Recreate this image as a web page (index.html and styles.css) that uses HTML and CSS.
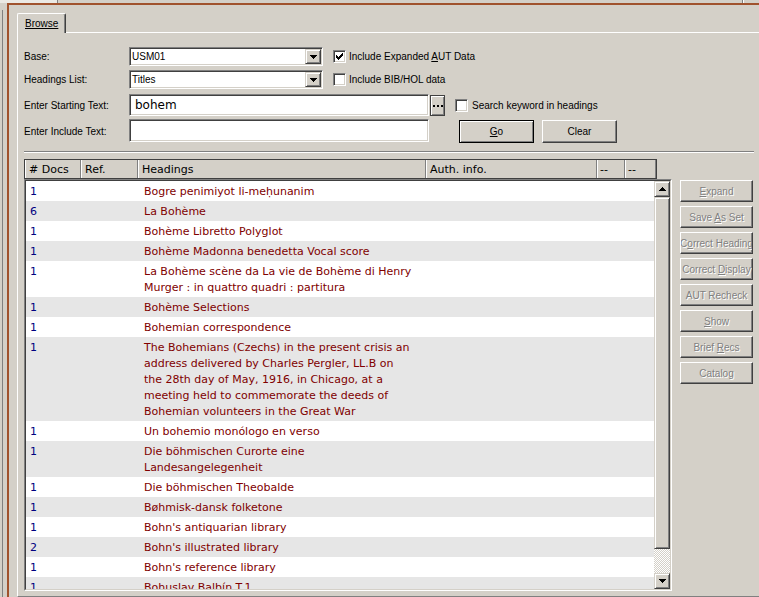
FILE: index.html
```html
<!DOCTYPE html>
<html>
<head>
<meta charset="utf-8">
<title>Browse</title>
<link rel="stylesheet" href="styles.css">
</head>
<body>
<div class="topstrip"><div class="ts-a"></div><div class="ts-b"></div></div>
<div class="shell">
  <div class="leftstrip"></div>
  <div class="window">
    <div class="tabs">
      <div class="tab"><span class="ul">Browse</span></div>
      <div class="tabfill"></div>
    </div>
    <div class="panel">
      <div class="frow r1">
        <span class="lbl">Base:</span>
        <div class="combo"><span class="cval">USM01</span><span class="dd"><svg width="7" height="4" viewBox="0 0 7 4" shape-rendering="crispEdges"><path d="M0 0H7V1H6V2H5V3H4V4H3V3H2V2H1V1H0Z" fill="#000"/></svg></span></div>
        <span class="chk"><svg width="7" height="7" viewBox="0 0 7 7" shape-rendering="crispEdges"><path d="M0 2H1V3H2V4H3V3H4V2H5V1H6V0H7V3H6V4H5V5H4V6H3V7H2V6H1V5H0Z" fill="#000"/></svg></span>
        <span class="clbl">Include Expanded <u>A</u>UT Data</span>
      </div>
      <div class="frow r2">
        <span class="lbl">Headings List:</span>
        <div class="combo"><span class="cval">Titles</span><span class="dd"><svg width="7" height="4" viewBox="0 0 7 4" shape-rendering="crispEdges"><path d="M0 0H7V1H6V2H5V3H4V4H3V3H2V2H1V1H0Z" fill="#000"/></svg></span></div>
        <span class="chk"></span>
        <span class="clbl">Include BIB/HOL data</span>
      </div>
      <div class="frow r3">
        <span class="lbl">Enter Starting Text:</span>
        <div class="tin big">bohem</div>
        <span class="dots"><svg width="10" height="2" viewBox="0 0 10 2" shape-rendering="crispEdges"><rect x="0" y="0" width="2" height="2" fill="#000"/><rect x="4" y="0" width="2" height="2" fill="#000"/><rect x="8" y="0" width="2" height="2" fill="#000"/></svg></span>
        <span class="chk"></span>
        <span class="clbl wide">Search keyword in headings</span>
      </div>
      <div class="frow r4">
        <span class="lbl mid">Enter Include Text:</span>
        <div class="tin tall"></div>
        <span class="btn def"><span><u>G</u>o</span></span>
        <span class="btn clear"><span>Clear</span></span>
      </div>
      <div class="sep"></div>
      <div class="main">
        <div class="listcol">
          <div class="hdr">
            <span class="hc w-docs"># Docs</span>
            <span class="hc w-ref">Ref.</span>
            <span class="hc w-head">Headings</span>
            <span class="hc w-auth">Auth. info.</span>
            <span class="hc w-x1">--</span>
            <span class="hc w-x2">--</span>
          </div>
          <div class="list">
            <div class="list-in">
              <div class="rows">
                <div class="row"><span class="c-docs">1</span><span></span><span class="c-head">Bogre penimiyot li-meḥunanim</span><span></span></div>
                <div class="row"><span class="c-docs">6</span><span></span><span class="c-head">La Bohème</span><span></span></div>
                <div class="row"><span class="c-docs">1</span><span></span><span class="c-head">Bohème Libretto Polyglot</span><span></span></div>
                <div class="row"><span class="c-docs">1</span><span></span><span class="c-head">Bohème Madonna benedetta Vocal score</span><span></span></div>
                <div class="row"><span class="c-docs">1</span><span></span><span class="c-head">La Bohème scène da La vie de Bohème di Henry<br>Murger : in quattro quadri : partitura</span><span></span></div>
                <div class="row"><span class="c-docs">1</span><span></span><span class="c-head">Bohème Selections</span><span></span></div>
                <div class="row"><span class="c-docs">1</span><span></span><span class="c-head">Bohemian correspondence</span><span></span></div>
                <div class="row"><span class="c-docs">1</span><span></span><span class="c-head">The Bohemians (Czechs) in the present crisis an<br>address delivered by Charles Pergler, LL.B on<br>the 28th day of May, 1916, in Chicago, at a<br>meeting held to commemorate the deeds of<br>Bohemian volunteers in the Great War</span><span></span></div>
                <div class="row"><span class="c-docs">1</span><span></span><span class="c-head">Un bohemio monólogo en verso</span><span></span></div>
                <div class="row"><span class="c-docs">1</span><span></span><span class="c-head">Die böhmischen Curorte eine<br>Landesangelegenheit</span><span></span></div>
                <div class="row"><span class="c-docs">1</span><span></span><span class="c-head">Die böhmischen Theobalde</span><span></span></div>
                <div class="row"><span class="c-docs">1</span><span></span><span class="c-head">Bøhmisk-dansk folketone</span><span></span></div>
                <div class="row"><span class="c-docs">1</span><span></span><span class="c-head">Bohn's antiquarian library</span><span></span></div>
                <div class="row"><span class="c-docs">2</span><span></span><span class="c-head">Bohn's illustrated library</span><span></span></div>
                <div class="row"><span class="c-docs">1</span><span></span><span class="c-head">Bohn's reference library</span><span></span></div>
                <div class="row"><span class="c-docs">1</span><span></span><span class="c-head">Bohuslav Balbín T.1</span><span></span></div>
              </div>
              <div class="sb">
                <span class="sbtn"><svg width="7" height="4" viewBox="0 0 7 4" shape-rendering="crispEdges"><path d="M3 0H4V1H5V2H6V3H7V4H0V3H1V2H2V1H3Z" fill="#000"/></svg></span>
                <span class="thumb"></span>
                <span class="track"></span>
                <span class="sbtn"><svg width="7" height="4" viewBox="0 0 7 4" shape-rendering="crispEdges"><path d="M0 0H7V1H6V2H5V3H4V4H3V3H2V2H1V1H0Z" fill="#000"/></svg></span>
              </div>
            </div>
          </div>
        </div>
        <div class="btncol">
          <span class="rbtn"><span><u>E</u>xpand</span></span>
          <span class="rbtn"><span>Save <u>A</u>s Set</span></span>
          <span class="rbtn"><span>C<u>o</u>rrect Heading</span></span>
          <span class="rbtn"><span>Correct <u>D</u>isplay</span></span>
          <span class="rbtn"><span>AUT Recheck</span></span>
          <span class="rbtn"><span><u>S</u>how</span></span>
          <span class="rbtn"><span>Brief <u>R</u>ecs</span></span>
          <span class="rbtn"><span>Catalog</span></span>
        </div>
      </div>
    </div>
  </div>
</div>
</body>
</html>
```
FILE: styles.css
```css
* { box-sizing: border-box; margin: 0; padding: 0; }
html, body { width: 759px; height: 597px; overflow: hidden; }
body {
  background: #d4d0c8;
  font-family: "Liberation Sans", Arial, sans-serif;
  font-size: 10px;
  color: #000;
}
u { text-decoration: underline; }

.topstrip { height: 3px; display: flex; }
.ts-a { width: 58px; background: #ebe9e4; border-right: 1px solid #808080; }
.ts-b { margin-left: auto; margin-right: 15px; width: 2px; border-left: 1px solid #808080; border-right: 1px solid #fff; }

.shell { display: flex; height: 594px; }
.leftstrip {
  width: 7px;
  margin-top: 7px;
  background: linear-gradient(to right, #d4d0c8 2px, #808080 2px, #808080 3px, #d4d0c8 3px);
}
.window {
  flex: 1;
  border-top: 2px solid #a0522d;
  border-left: 2px solid #a0522d;
  padding: 8px 0 0 8px;
  display: flex;
  flex-direction: column;
}

.tabs { display: flex; height: 20px; }
.tab {
  width: 49px;
  height: 20px;
  border-top: 1px solid #fff;
  border-left: 1px solid #fff;
  border-right: 1px solid #404040;
  border-top-left-radius: 2px;
  border-top-right-radius: 2px;
  box-shadow: inset -1px 0 #808080;
  padding: 4px 0 0 7px;
  line-height: 12px;
}
.ul { text-decoration: underline; }
.tabfill { flex: 1; border-bottom: 1px solid #fff; }

.panel {
  flex: 1;
  border-left: 1px solid #fff;
  border-bottom: 1px solid #808080;
  padding: 14px 0 0 6px;
}

.frow { display: flex; align-items: center; }
.r1 { height: 19px; margin-bottom: 4px; }
.r2 { height: 19px; margin-bottom: 5px; }
.r3 { height: 22px; margin-bottom: 3px; }
.r4 { height: 24px; align-items: flex-start; }
.lbl { width: 105px; white-space: nowrap; }
.lbl.mid { align-self: center; }

.combo {
  width: 194px;
  height: 19px;
  background: #fff;
  border: 1px solid;
  border-color: #808080 #fff #fff #808080;
  box-shadow: inset 1px 1px #404040, inset -1px -1px #d4d0c8;
  display: flex;
  align-items: center;
  padding: 1px 1px 1px 2px;
}
.cval { flex: 1; }
.dd {
  width: 16px;
  height: 15px;
  background: #d4d0c8;
  border: 1px solid;
  border-color: #d4d0c8 #404040 #404040 #d4d0c8;
  box-shadow: inset 1px 1px #fff, inset -1px -1px #808080;
  display: flex;
  align-items: center;
  justify-content: center;
}
.dd svg, .sbtn svg, .chk svg, .dots svg { display: block; }

.chk {
  width: 13px;
  height: 13px;
  margin-left: 10px;
  background: #fff;
  border: 1px solid;
  border-color: #808080 #fff #fff #808080;
  box-shadow: inset 1px 1px #404040, inset -1px -1px #d4d0c8;
  display: flex;
  align-items: center;
  justify-content: center;
}
.clbl { margin-left: 3px; white-space: nowrap; }
.clbl.wide { margin-left: 4px; }

.tin {
  width: 300px;
  background: #fff;
  border: 1px solid;
  border-color: #808080 #fff #fff #808080;
  box-shadow: inset 1px 1px #404040, inset -1px -1px #d4d0c8;
  padding-left: 5px;
}
.tin.big {
  height: 22px;
  font-family: "DejaVu Sans", sans-serif;
  font-size: 12px;
  line-height: 20px;
}
.tin.tall { height: 23px; }

.dots {
  width: 15px;
  height: 21px;
  margin-left: 1px;
  background: #d4d0c8;
  border: 1px solid #404040;
  box-shadow: inset 1px 1px #fff, inset -1px -1px #808080;
  display: flex;
  align-items: center;
  justify-content: center;
  padding-top: 2px;
}

.btn {
  width: 75px;
  height: 23px;
  margin-top: 1px;
  display: flex;
  align-items: center;
  justify-content: center;
  background: #d4d0c8;
  border: 1px solid;
  border-color: #fff #404040 #404040 #fff;
  box-shadow: inset -1px -1px #808080;
  white-space: nowrap;
}
.btn.def {
  margin-left: 30px;
  border-color: #000;
  box-shadow: inset 1px 1px #fff, inset -1px -1px #808080;
}
.btn.clear { margin-left: 8px; }

.sep {
  width: 730px;
  height: 2px;
  margin-top: 8px;
  border-top: 1px solid #808080;
  border-bottom: 1px solid #fff;
}

.main { display: flex; margin-top: 6px; }
.listcol { width: 648px; }

.hdr {
  width: 633px;
  height: 20px;
  display: flex;
  border: 1px solid #404040;
  font-family: "DejaVu Sans", sans-serif;
  font-size: 11px;
  background: #d4d0c8;
}
.hc {
  border-left: 1px solid #fff;
  border-right: 1px solid #808080;
  padding: 1px 0 0 3px;
  line-height: 17px;
  white-space: nowrap;
  overflow: hidden;
}
.w-docs { width: 56px; }
.w-ref { width: 57px; }
.w-head { width: 288px; }
.w-auth { width: 171px; }
.w-x1 { width: 28px; padding-left: 2px; }
.w-x2 { width: 31px; padding-left: 2px; }

.list {
  width: 648px;
  height: 412px;
  border: 1px solid;
  border-color: #808080 #fff #fff #808080;
}
.list-in {
  height: 100%;
  display: flex;
  border: 1px solid;
  border-color: #404040 #d4d0c8 #d4d0c8 #404040;
}
.rows {
  width: 628px;
  overflow: hidden;
  font-family: "DejaVu Sans", sans-serif;
  font-size: 11px;
  background: #fff;
}
.row {
  display: grid;
  grid-template-columns: 55px 57px 288px 1fr;
  line-height: 16px;
  padding: 3px 0 1px;
  background: #fff;
}
.row:nth-child(even) { background: #e6e6e6; }
.c-docs { padding-left: 4px; color: #000080; }
.c-head { padding-left: 6px; color: #800000; white-space: nowrap; }

.sb { width: 16px; display: flex; flex-direction: column; }
.sbtn, .thumb {
  background: #d4d0c8;
  border: 1px solid;
  border-color: #d4d0c8 #404040 #404040 #d4d0c8;
  box-shadow: inset 1px 1px #fff, inset -1px -1px #808080;
}
.sbtn { height: 16px; display: flex; align-items: center; justify-content: center; }
.thumb { height: 352px; }
.track {
  height: 24px;
  background-color: #d4d0c8;
  background-image: conic-gradient(#fff 25%, transparent 0 50%, #fff 0 75%, transparent 0);
  background-size: 2px 2px;
}

.btncol {
  margin-left: 8px;
  padding-top: 21px;
  display: flex;
  flex-direction: column;
  gap: 4px;
}
.rbtn {
  width: 73px;
  height: 22px;
  display: flex;
  align-items: center;
  justify-content: center;
  white-space: nowrap;
  overflow: hidden;
  color: #808080;
  text-shadow: 1px 1px 0 #fff;
  background: #d4d0c8;
  border: 1px solid;
  border-color: #fff #404040 #404040 #fff;
  box-shadow: inset -1px -1px #808080;
}
```
